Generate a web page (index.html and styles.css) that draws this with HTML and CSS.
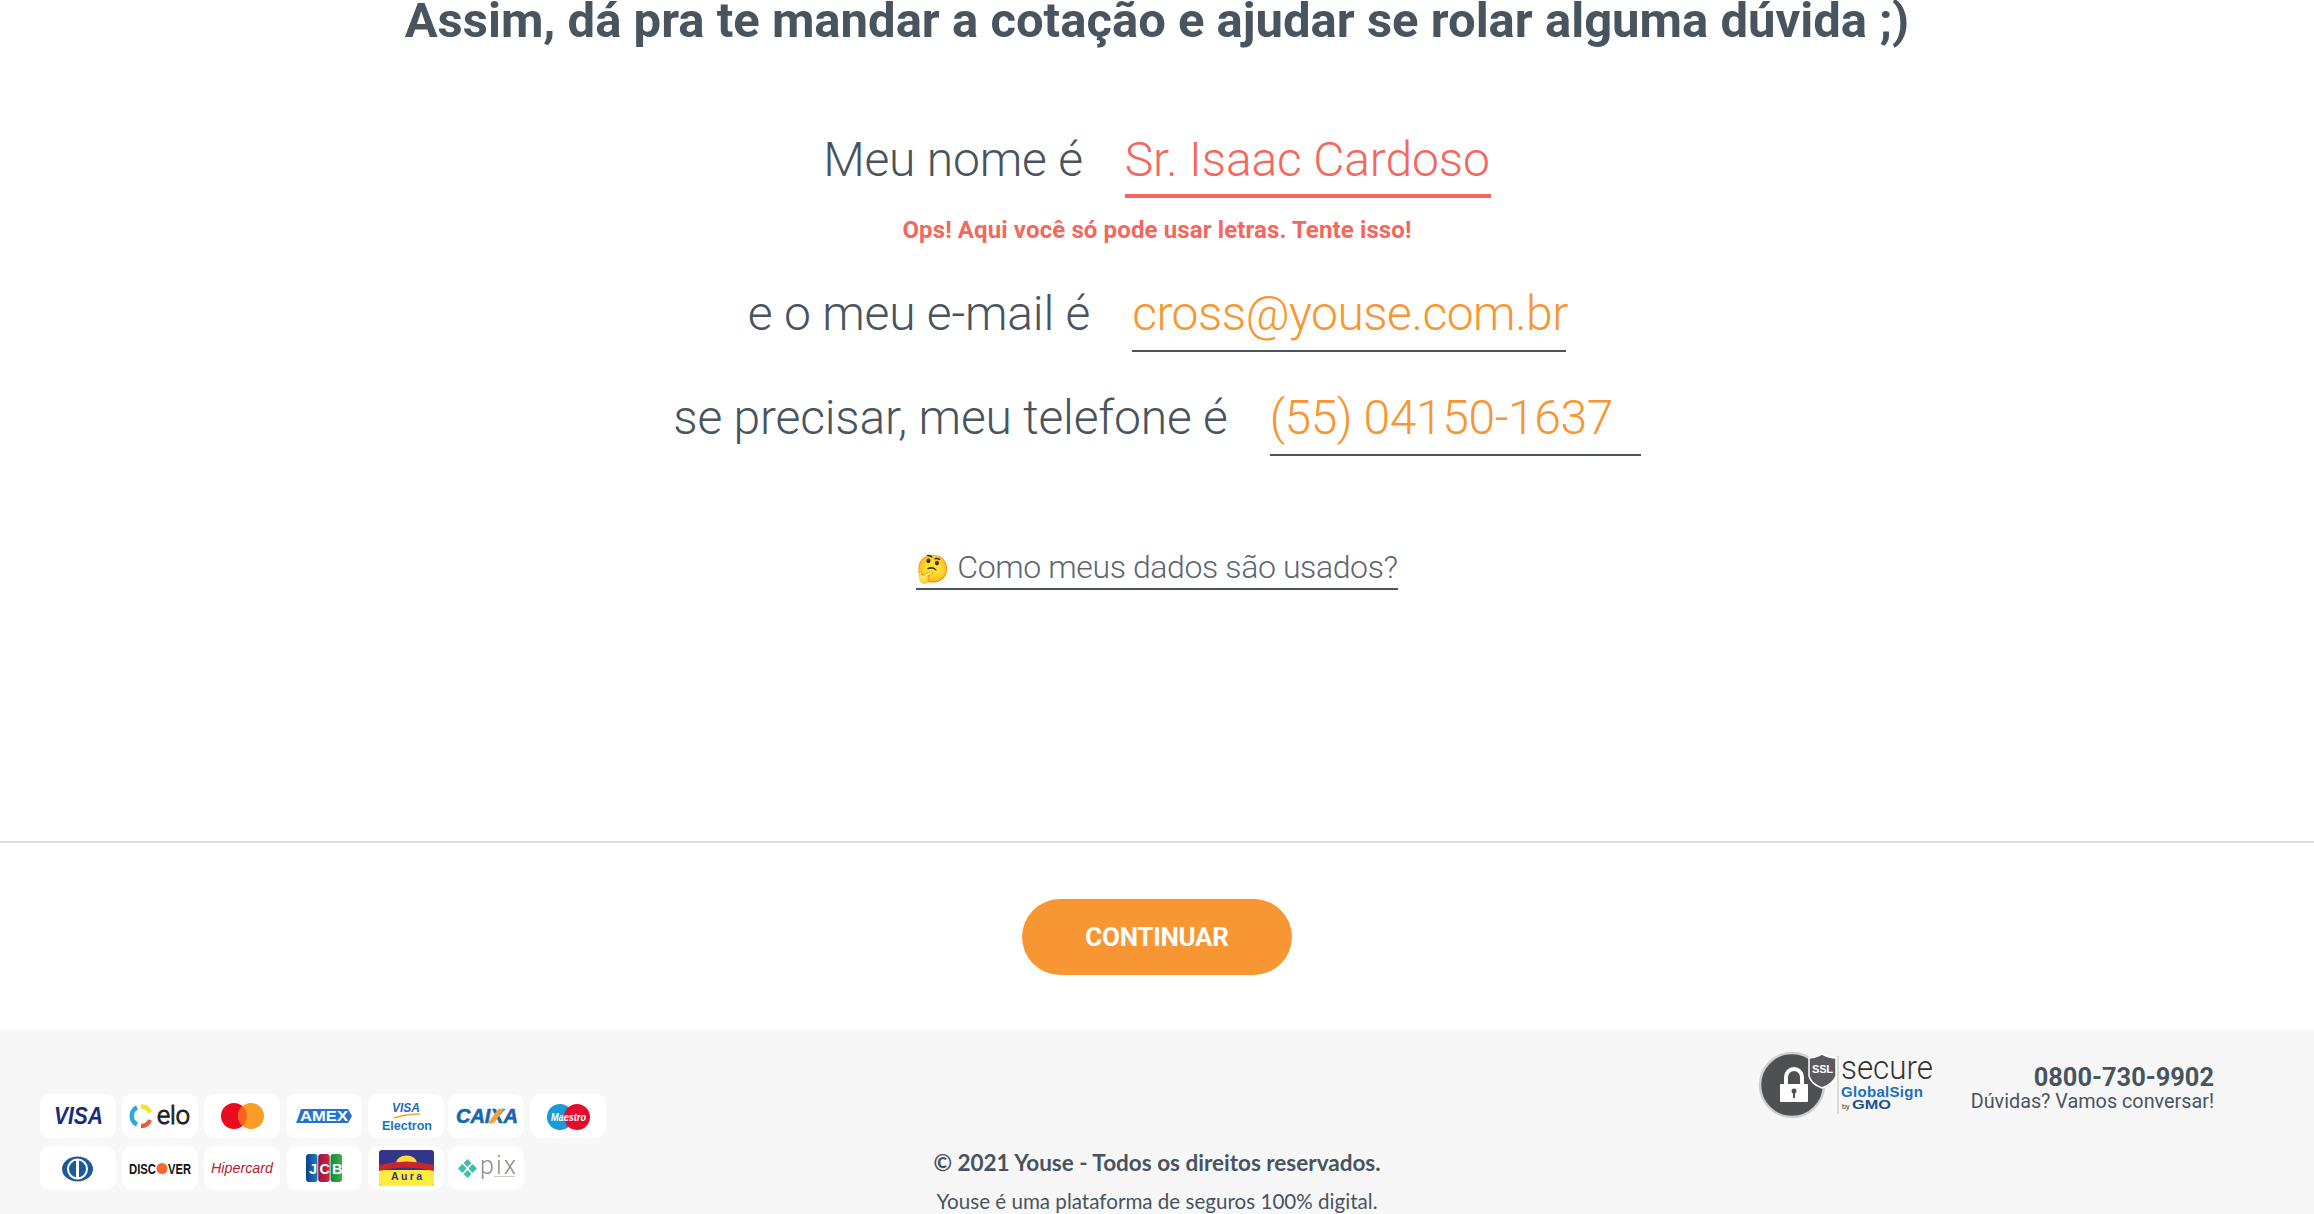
FILE: index.html
```html
<!DOCTYPE html>
<html lang="pt-BR">
<head>
<meta charset="utf-8">
<title>Youse</title>
<link rel="stylesheet" href="styles.css">
</head>
<body>
<main class="form">
  <h1 class="title">Assim, dá pra te mandar a cotação e ajudar se rolar alguma dúvida ;)</h1>
  <div class="rows">
    <div class="row"><span class="label">Meu nome é</span><span class="value value-error value-name">Sr. Isaac Cardoso</span></div>
    <p class="error">Ops! Aqui você só pode usar letras. Tente isso!</p>
    <div class="row"><span class="label">e o meu e-mail é</span><span class="value value-email">cross@youse.com.br</span></div>
    <div class="row row-phone"><span class="label">se precisar, meu telefone é</span><span class="value value-phone">(55) 04150-1637</span></div>
  </div>
  <a class="privacy"><span class="emoji">🤔</span> Como meus dados são usados?</a>
</main>
<div class="actions"><button class="cta">CONTINUAR</button></div>
<footer class="footer">
  <div class="cards">
    <div class="card"><svg viewBox="0 0 76 44"><text x="14" y="30" class="lg-i" font-size="23" fill="#1a2b7e" textLength="49" lengthAdjust="spacingAndGlyphs">VISA</text></svg></div>
    <div class="card"><svg viewBox="0 0 76 44"><g fill="none" stroke-width="4.5"><path d="M19 12.500a9.500 9.500 0 0 1 9 6" stroke="#fde01f"/><path d="M15 30.500a9.500 9.500 0 0 1 0-17" stroke="#2fa7e0"/><path d="M28 26a9.500 9.500 0 0 1-9 6" stroke="#ef5a35"/></g><text x="35" y="30" class="lg-l" font-size="25" fill="#222" stroke="#222" stroke-width="1" textLength="33" lengthAdjust="spacingAndGlyphs">elo</text></svg></div>
    <div class="card"><svg viewBox="0 0 76 44"><circle cx="30" cy="22" r="13" fill="#ec0a1e"/><circle cx="47" cy="22" r="13" fill="#fb9d27"/><path d="M38.500 12.200a13 13 0 0 1 0 19.600a13 13 0 0 1 0-19.600z" fill="#ff5f22"/></svg></div>
    <div class="card"><svg viewBox="0 0 76 44"><path d="M15 15h47l4 7-4 7H10l2-5z" fill="#2672cc"/><text x="14" y="27" class="lg-b" font-size="15" fill="#fff" textLength="48" lengthAdjust="spacingAndGlyphs">AMEX</text></svg></div>
    <div class="card"><svg viewBox="0 0 76 44"><text x="24" y="18" class="lg-i" font-size="13" fill="#1b6db5" textLength="28" lengthAdjust="spacingAndGlyphs">VISA</text><path d="M26 24q12-4 26-4" fill="none" stroke="#f2a33a" stroke-width="1.5"/><text x="14" y="36" class="lg-b" font-size="13" fill="#1d72b8" textLength="50" lengthAdjust="spacingAndGlyphs">Electron</text></svg></div>
    <div class="card"><svg viewBox="0 0 76 44"><text x="8" y="29" class="lg-i" font-size="20" fill="#1866ae" stroke="#1866ae" stroke-width=".6" textLength="62" lengthAdjust="spacing">CAIXA</text><path d="M40 29h6l10-14h-6z" fill="#f2a33a"/></svg></div>
    <div class="card"><svg viewBox="0 0 76 44"><circle cx="30" cy="23" r="13" fill="#1a9ad6"/><circle cx="47" cy="23" r="13" fill="#e40b2d"/><text x="21" y="27" class="lg-i" font-size="10.500" fill="#fff" textLength="35" lengthAdjust="spacingAndGlyphs">Maestro</text></svg></div>
    <div class="card"><svg viewBox="0 0 76 44"><ellipse cx="37.500" cy="23" rx="15.500" ry="12.500" fill="#1b5b9c"/><circle cx="37.500" cy="23" r="10.500" fill="#fff"/><circle cx="37.500" cy="23" r="8.500" fill="#1b5b9c"/><rect x="36" y="13" width="3" height="20" fill="#fff"/></svg></div>
    <div class="card"><svg viewBox="0 0 76 44"><text x="7" y="28" class="lg-b" font-size="15" fill="#111" textLength="27" lengthAdjust="spacingAndGlyphs">DISC</text><circle cx="40" cy="22.500" r="5.500" fill="#f7682c"/><text x="46" y="28" class="lg-b" font-size="15" fill="#111" textLength="23" lengthAdjust="spacingAndGlyphs">VER</text></svg></div>
    <div class="card"><svg viewBox="0 0 76 44"><text x="7" y="27" class="lg-it" font-size="15.500" fill="#b5192f" textLength="62" lengthAdjust="spacingAndGlyphs">Hipercard</text></svg></div>
    <div class="card"><svg viewBox="0 0 76 44"><defs><linearGradient id="jb"><stop offset="0" stop-color="#0e3f8c"/><stop offset="1" stop-color="#1f7cc4"/></linearGradient><linearGradient id="jr"><stop offset="0" stop-color="#8c1a3c"/><stop offset="1" stop-color="#d62046"/></linearGradient><linearGradient id="jg"><stop offset="0" stop-color="#128a3c"/><stop offset="1" stop-color="#3fae49"/></linearGradient></defs><rect x="20" y="8" width="11.500" height="28" rx="3" fill="url(#jb)"/><rect x="32.200" y="8" width="11.500" height="28" rx="3" fill="url(#jr)"/><rect x="44.500" y="8" width="11.500" height="28" rx="3" fill="url(#jg)"/><text x="23" y="27.500" class="lg-b" font-size="14.500" fill="#fff">J</text><text x="33.500" y="27.500" class="lg-b" font-size="14.500" fill="#fff">C</text><text x="46" y="27.500" class="lg-b" font-size="14.500" fill="#fff">B</text></svg></div>
    <div class="card"><svg viewBox="0 0 76 44"><rect x="11" y="4" width="55" height="36" rx="3" fill="#32378b"/><path d="M11 24h55v13a3 3 0 0 1-3 3H14a3 3 0 0 1-3-3z" fill="#ffed3d"/><path d="M28 17a10.500 7.500 0 0 1 21 0z" fill="#ffd93a"/><path d="M11 19q27.500-7 55 0v6q-27.500-7-55 0z" fill="#c9252f"/><text x="23" y="34" class="lg-b" font-size="10.500" fill="#32378b" textLength="31">Aura</text></svg></div>
    <div class="card"><svg viewBox="0 0 76 44"><g fill="#42bdac"><path d="M19.500 13l4 4-4 4-4-4z"/><path d="M14.500 18l4 4.500-4 4.500-4.500-4.500z"/><path d="M24.500 18l4.500 4.500-4.500 4.500-4-4.500z"/><path d="M19.500 24l4 4-4 4-4-4z"/></g><text x="32" y="28" class="lg-l" font-size="25" fill="#8d8d8d" textLength="36" lengthAdjust="spacing">pix</text><path d="M46 30.500h21" stroke="#c8c8c8"/></svg></div>
  </div>
  <div class="copy"><strong>© 2021 Youse - Todos os direitos reservados.</strong><span>Youse é uma plataforma de seguros 100% digital.</span></div>
  <div class="support">
    <svg class="ssl" viewBox="0 0 178 70"><circle cx="35" cy="35" r="32" fill="#4f5052" stroke="#cfcfcf" stroke-width="2.500"/><path d="M29 36V27a8 8 0 0 1 16 0v9" fill="none" stroke="#fff" stroke-width="4"/><rect x="23" y="34" width="28" height="18" rx="1" fill="#fff"/><circle cx="37" cy="41" r="2.500" fill="#4f5052"/><rect x="36" y="42" width="2" height="6" fill="#4f5052"/><path d="M52 8q7 0 13-4 7 4 14 4v18q-3 8-14 12-11-4-13-12z" fill="#5a5b5e" stroke="#fff" stroke-width="1.500"/><text x="55" y="23" class="ssl-tag" font-size="11" fill="#fff" textLength="21">SSL</text><path d="M81 6v58" stroke="#bdbdbd"/><text x="84" y="29" class="lg-l" font-size="34" fill="#333" textLength="92" lengthAdjust="spacingAndGlyphs">secure</text><text x="84" y="47" class="lg-b" font-size="15" fill="#1f6fb8" textLength="82">GlobalSign</text><text x="85" y="59" class="lg-r" font-size="7" fill="#234">by</text><text x="95" y="59" class="lg-b" font-size="12" fill="#1f4f8c" textLength="39" lengthAdjust="spacingAndGlyphs">GMO</text></svg>
    <div class="contact"><strong>0800-730-9902</strong><span>Dúvidas? Vamos conversar!</span></div>
  </div>
</footer>
</body>
</html>
```
FILE: styles.css
```css
*{box-sizing:border-box}
html,body{margin:0;padding:0}
body{width:2314px;height:1214px;overflow:hidden;background:#fff;color:#48545e;font-family:Roboto,sans-serif}
.form{height:841px;display:flex;flex-direction:column;align-items:center}
.title{margin:0;font-size:49px;line-height:42px;font-weight:700;white-space:nowrap;letter-spacing:0}
.rows{margin-top:89px;display:flex;flex-direction:column;align-items:center}
.row{display:flex;align-items:flex-start;gap:42px;font-size:48px;font-weight:300;letter-spacing:-.4px;white-space:nowrap;line-height:58px}
.label{letter-spacing:-.2px}
.row-phone{margin-top:37px}
.value{display:block;color:#f79633;border-bottom:2px solid #48545e;padding-bottom:7px}
.value-name{width:366px;letter-spacing:-.15px}
.value-email{width:434px;letter-spacing:-.5px}
.value-phone{width:371px}
.value-error{color:#f4675c;border-bottom:4px solid #f4675c;padding-bottom:5px}
.error{margin:16px 0 39px;color:#f4675c;font-size:24px;line-height:32px;font-weight:700;letter-spacing:.12px}
.privacy{margin-top:93px;padding-bottom:1px;font-size:32px;line-height:36px;font-weight:300;letter-spacing:-.38px;color:#5a6670;border-bottom:2px solid #48545e}
.emoji{font-size:27px}
.actions{height:189px;border-top:2px solid #d9d9d9;display:flex;justify-content:center;padding-top:56px}
.cta{width:270px;height:76px;border:0;border-radius:38px;background:#f79633;color:#fff;font:700 26px Roboto,sans-serif;letter-spacing:-.3px}
.footer{height:184px;background:#f7f7f7;display:grid;grid-template-columns:1fr auto 1fr;overflow:hidden}
.cards{display:grid;grid-template-columns:repeat(4,76px) 74px repeat(2,76px);grid-auto-rows:44px;gap:8px 6px;padding:64px 0 0 40px;align-content:start}
.card{width:76px;height:44px;background:#fff;border-radius:10px}
.card svg{display:block;width:76px;height:44px;overflow:visible}
.lg-b{font-family:"Liberation Sans",sans-serif;font-weight:700}
.lg-i{font-family:"Liberation Sans",sans-serif;font-weight:700;font-style:italic}
.lg-it{font-family:"Liberation Sans",sans-serif;font-style:italic}
.lg-r{font-family:"Liberation Sans",sans-serif}
.lg-l{font-family:Roboto,sans-serif;font-weight:300}
.ssl-tag{font-family:"Liberation Sans",sans-serif;font-weight:700}
.copy{display:flex;flex-direction:column;align-items:center;padding-top:117px;font-family:Lato,sans-serif}
.copy strong{font-size:22.500px;line-height:32px}
.copy span{margin-top:7px;font-size:20.600px;line-height:30px}
.support{display:flex;justify-content:flex-end;align-items:flex-start;padding:20px 100px 0 0;gap:36px}
.ssl{width:178px;height:70px;display:block;overflow:visible}
.contact{display:flex;flex-direction:column;align-items:flex-end;padding-top:14px}
.contact strong{font-size:25.400px;line-height:26px}
.contact span{font-size:19.800px;line-height:24px}
```
